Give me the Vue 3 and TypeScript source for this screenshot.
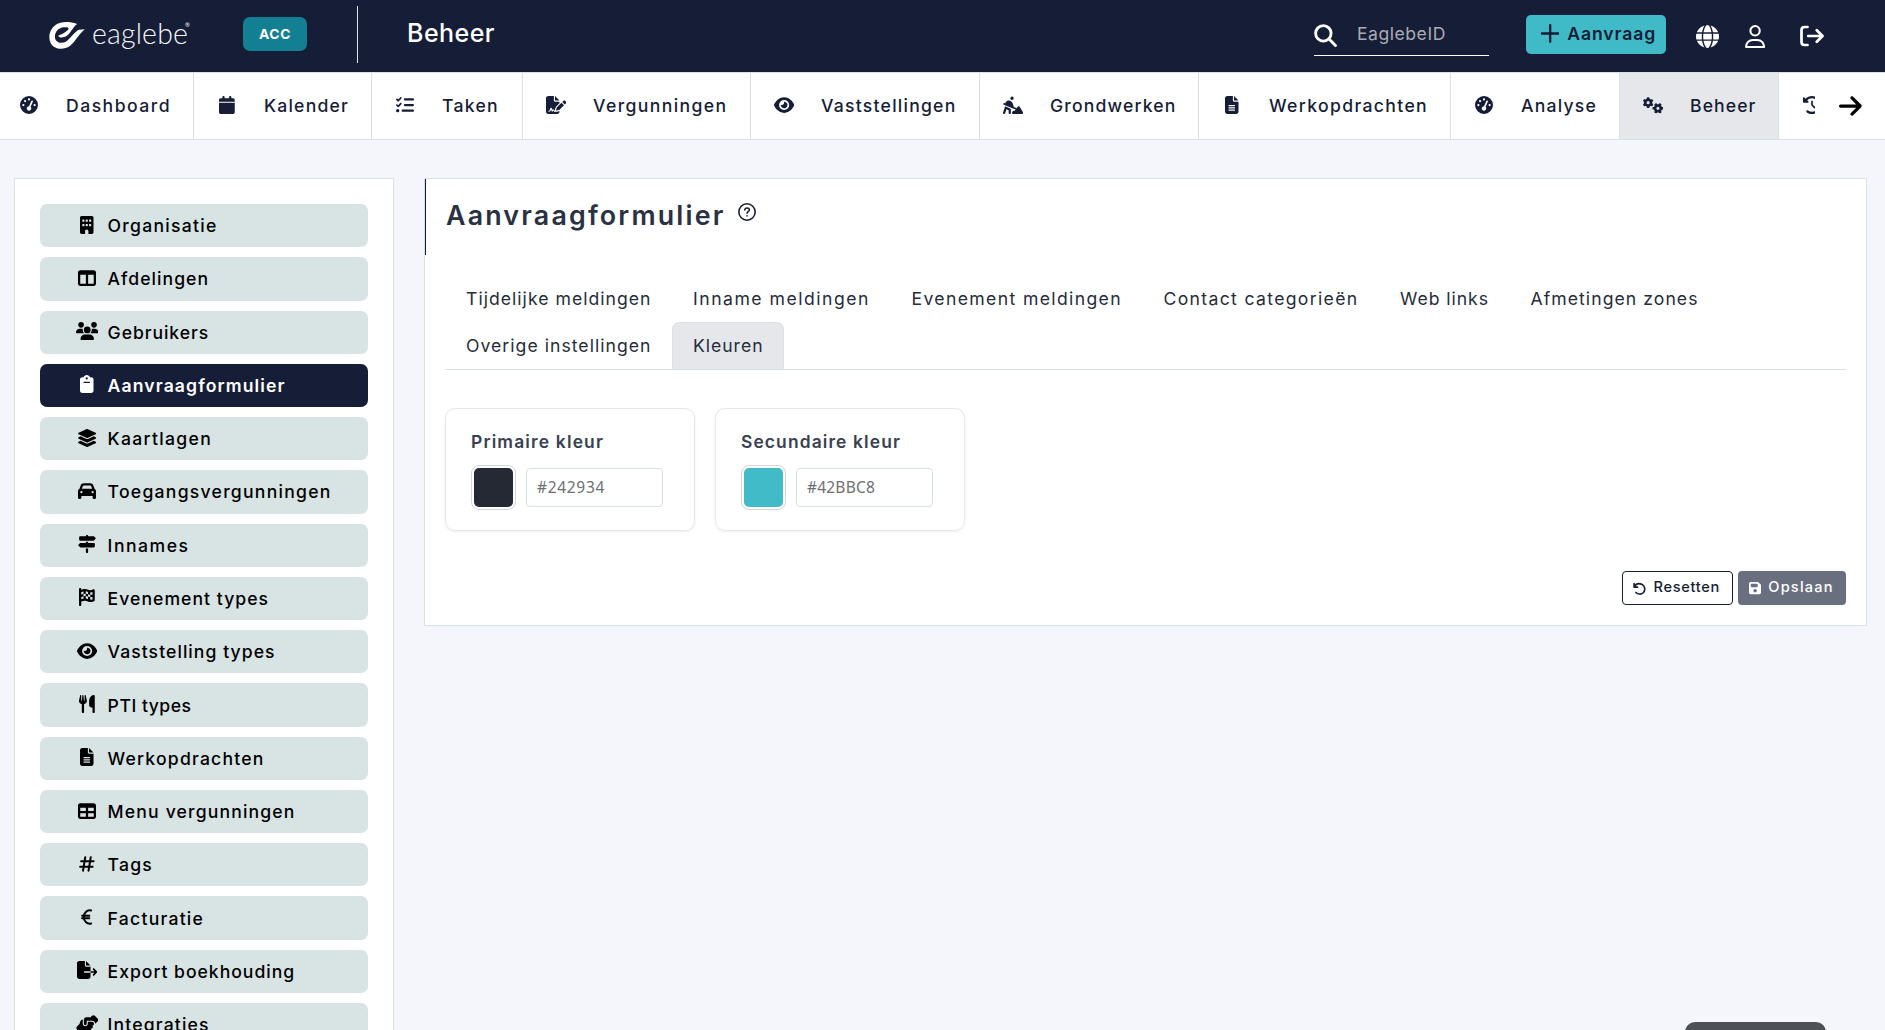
<script setup lang="ts">
import { h } from 'vue'

interface Glyph {
  w: number
  d: string
  stroke?: number
}

const glyphs: Record<string, Glyph> = {
  gauge: { w: 512, d: 'M0 256a256 256 0 1 1 512 0A256 256 0 1 1 0 256zM288 96a32 32 0 1 0 -64 0 32 32 0 1 0 64 0zM256 416c35.3 0 64-28.7 64-64c0-17.4-6.9-33.1-18.1-44.6L366 161.7c5.3-12.1-.2-26.3-12.3-31.6s-26.3 .2-31.6 12.3L257.9 288c-.6 0-1.3 0-1.9 0c-35.3 0-64 28.7-64 64s28.7 64 64 64zM176 144a32 32 0 1 0 -64 0 32 32 0 1 0 64 0zM96 288a32 32 0 1 0 0-64 32 32 0 1 0 0 64zm352-32a32 32 0 1 0 -64 0 32 32 0 1 0 64 0z' },
  calendar: { w: 448, d: 'M96 32V64H48C21.5 64 0 85.5 0 112v48H448V112c0-26.5-21.5-48-48-48H352V32c0-17.7-14.3-32-32-32s-32 14.3-32 32V64H160V32c0-17.7-14.3-32-32-32S96 14.3 96 32zM448 192H0V464c0 26.5 21.5 48 48 48H400c26.5 0 48-21.5 48-48V192z' },
  tasks: { w: 512, d: 'M152.1 38.2c9.9 8.9 10.7 24 1.8 33.9l-72 80c-4.4 4.9-10.6 7.8-17.2 7.9s-12.9-2.4-17.6-7L7 113C-2.3 103.6-2.3 88.4 7 79s24.6-9.4 33.9 0l22.1 22.1 55.1-61.2c8.9-9.9 24-10.7 33.9-1.8zm0 160c9.9 8.9 10.7 24 1.8 33.9l-72 80c-4.4 4.9-10.6 7.8-17.2 7.9s-12.9-2.4-17.6-7L7 273c-9.4-9.4-9.4-24.6 0-33.9s24.6-9.4 33.9 0l22.1 22.1 55.1-61.2c8.9-9.9 24-10.7 33.9-1.8zM224 96c0-17.7 14.3-32 32-32H480c17.7 0 32 14.3 32 32s-14.3 32-32 32H256c-17.7 0-32-14.3-32-32zm0 160c0-17.7 14.3-32 32-32H480c17.7 0 32 14.3 32 32s-14.3 32-32 32H256c-17.7 0-32-14.3-32-32zM160 416c0-17.7 14.3-32 32-32H480c17.7 0 32 14.3 32 32s-14.3 32-32 32H192c-17.7 0-32-14.3-32-32zM48 368a48 48 0 1 1 0 96 48 48 0 1 1 0-96z' },
  signature: { w: 576, d: 'M64 0C28.7 0 0 28.7 0 64V448c0 35.3 28.7 64 64 64H320c35.3 0 64-28.7 64-64V428.7c-2.7 1.1-5.4 2-8.2 2.7l-60.1 15c-3 .7-6 1.2-9 1.4c-.9 .1-1.8 .2-2.7 .2H240c-6.1 0-11.6-3.4-14.3-8.8l-8.8-17.7c-1.7-3.4-5.1-5.5-8.8-5.5s-7.2 2.1-8.8 5.5l-8.8 17.7c-2.9 5.9-9.2 9.4-15.7 8.8s-12.1-5.1-13.9-11.3L144 381l-9.8 32.8c-6.1 20.3-24.8 34.2-46 34.2H80c-8.8 0-16-7.2-16-16s7.2-16 16-16h8.2c7.1 0 13.3-4.6 15.3-11.4l14.9-49.5c3.4-11.3 13.8-19.1 25.6-19.1s22.2 7.7 25.6 19.1l11.6 38.6c7.4-6.2 16.8-9.7 26.8-9.7c15.9 0 30.4 9 37.5 23.2l4.4 8.8h8.9c-3.1-8.8-3.7-18.4-1.4-27.8l15-60.1c2.8-11.3 8.6-21.5 16.8-29.7L384 203.6V160H256c-17.7 0-32-14.3-32-32V0H64zM256 0V128H384L256 0zM549.8 139.7c-15.6-15.6-40.9-15.6-56.6 0l-29.4 29.4 71 71 29.4-29.4c15.6-15.6 15.6-40.9 0-56.6l-14.4-14.4zM311.9 321c-4.1 4.1-7 9.2-8.4 14.9l-15 60.1c-1.4 5.5 .2 11.2 4.2 15.2s9.7 5.6 15.2 4.2l60.1-15c5.6-1.4 10.8-4.3 14.9-8.4L512.1 262.7l-71-71L311.9 321z' },
  eye: { w: 576, d: 'M288 32c-80.8 0-145.5 36.8-192.6 80.6C48.6 156 17.3 208 2.5 243.7c-3.3 7.9-3.3 16.7 0 24.6C17.3 304 48.6 356 95.4 399.4C142.5 443.2 207.2 480 288 480s145.5-36.8 192.6-80.6c46.8-43.5 78.1-95.4 93-131.1c3.3-7.9 3.3-16.7 0-24.6c-14.9-35.7-46.2-87.7-93-131.1C433.5 68.8 368.8 32 288 32zM144 256a144 144 0 1 1 288 0 144 144 0 1 1 -288 0zm144-64c0 35.3-28.7 64-64 64c-7.1 0-13.9-1.2-20.3-3.3c-5.5-1.8-11.9 1.6-11.7 7.4c.3 6.9 1.3 13.8 3.2 20.7c13.7 51.2 66.4 81.6 117.6 67.9s81.6-66.4 67.9-117.6c-11.1-41.5-47.8-69.4-88.6-71.1c-5.8-.2-9.2 6.1-7.4 11.7c2.1 6.4 3.3 13.2 3.3 20.3z' },
  digging: { w: 576, d: 'M208 64a48 48 0 1 1 96 0 48 48 0 1 1 -96 0zM9.8 214.8c5.1-12.2 19.1-18 31.4-12.9L60.7 210l22.9-38.1C99.9 144.6 129.3 128 161 128c51.4 0 97 32.9 113.3 81.7l34.6 103.7 79.3 33.1 34.2-45.6c6.4-8.5 16.6-13.3 27.2-12.8s20.3 6.4 25.8 15.5l96 160c5.9 9.9 6.1 22.2 .4 32.2s-16.3 16.2-27.8 16.2H288c-11.1 0-21.4-5.7-27.2-15.2s-6.4-21.2-1.4-31.1l16-32c5.4-10.8 16.5-17.7 28.6-17.7h32l22.5-30L22.8 246.2c-12.2-5.1-18-19.1-12.9-31.4zm82.8 91.8l112 48c11.8 5 19.4 16.6 19.4 29.4v96c0 17.7-14.3 32-32 32s-32-14.3-32-32V405.1l-60.6-26-37 111c-5.6 16.8-23.7 25.8-40.5 20.2S-3.9 486.6 1.6 469.9l48-144 11-33 32 13.7z' },
  file: { w: 384, d: 'M64 0C28.7 0 0 28.7 0 64V448c0 35.3 28.7 64 64 64H320c35.3 0 64-28.7 64-64V160H256c-17.7 0-32-14.3-32-32V0H64zM256 0V128H384L256 0zM112 256H272c8.8 0 16 7.2 16 16s-7.2 16-16 16H112c-8.8 0-16-7.2-16-16s7.2-16 16-16zm0 64H272c8.8 0 16 7.2 16 16s-7.2 16-16 16H112c-8.8 0-16-7.2-16-16s7.2-16 16-16zm0 64H272c8.8 0 16 7.2 16 16s-7.2 16-16 16H112c-8.8 0-16-7.2-16-16s7.2-16 16-16z' },
  gear: { w: 320, d: 'M308.5 135.3c7.1-6.3 9.9-16.2 6.2-25c-2.3-5.3-4.8-10.5-7.6-15.5L304 89.4c-3-5-6.3-9.9-9.8-14.6c-5.7-7.6-15.7-10.1-24.7-7.1l-28.2 9.3c-10.7-8.8-23-16-36.2-20.9L199 27.1c-1.9-9.3-9.1-16.7-18.5-17.8C173.9 8.4 167.2 8 160.4 8h-.7c-6.8 0-13.5 .4-20.1 1.2c-9.4 1.1-16.6 8.6-18.5 17.8L115 56.1c-13.3 5-25.5 12.1-36.2 20.9L50.5 67.8c-9-3-19-.5-24.7 7.1c-3.5 4.7-6.8 9.6-9.9 14.6l-3 5.3c-2.8 5-5.3 10.2-7.6 15.6c-3.7 8.7-.9 18.6 6.2 25l22.2 19.8C32.6 161.9 32 168.9 32 176s.6 14.1 1.7 20.9L11.5 216.7c-7.1 6.3-9.9 16.2-6.2 25c2.3 5.3 4.8 10.5 7.6 15.6l3 5.2c3 5.1 6.3 9.9 9.9 14.6c5.7 7.6 15.7 10.1 24.7 7.1l28.2-9.3c10.7 8.8 23 16 36.2 20.9l6.1 29.1c1.9 9.3 9.1 16.7 18.5 17.8c6.7 .8 13.5 1.2 20.4 1.2s13.7-.4 20.4-1.2c9.4-1.1 16.6-8.6 18.5-17.8l6.1-29.1c13.3-5 25.5-12.1 36.2-20.9l28.2 9.3c9 3 19 .5 24.7-7.1c3.5-4.7 6.8-9.5 9.8-14.6l3.1-5.4c2.8-5 5.3-10.2 7.6-15.5c3.7-8.7 .9-18.6-6.2-25l-22.2-19.8c1.1-6.8 1.7-13.8 1.7-20.9s-.6-14.1-1.7-20.9l22.2-19.8zM112 176a48 48 0 1 1 96 0 48 48 0 1 1 -96 0z' },
  history: { w: 512, d: 'M75 75L41 41C25.9 25.9 0 36.6 0 57.9V168c0 13.3 10.7 24 24 24H134.1c21.4 0 32.1-25.9 17-41l-30.8-30.8C155 85.5 203 64 256 64c106 0 192 86 192 192s-86 192-192 192c-40.8 0-78.6-12.7-109.7-34.4c-14.5-10.1-34.4-6.6-44.6 7.9s-6.6 34.4 7.9 44.6C151.2 495 201.7 512 256 512c141.4 0 256-114.6 256-256S397.4 0 256 0C185.3 0 121.3 28.7 75 75zm181 53c-13.3 0-24 10.7-24 24V256c0 6.4 2.5 12.5 7 17l72 72c9.4 9.4 24.6 9.4 33.9 0s9.4-24.6 0-33.9l-65-65V152c0-13.3-10.7-24-24-24z' },
  arrow: { w: 448, d: 'M438.6 278.6c12.5-12.5 12.5-32.8 0-45.3l-160-160c-12.5-12.5-32.8-12.5-45.3 0s-12.5 32.8 0 45.3L338.8 224 32 224c-17.7 0-32 14.3-32 32s14.3 32 32 32l306.7 0L233.4 393.4c-12.5 12.5-12.5 32.8 0 45.3s32.8 12.5 45.3 0l160-160z' },
  building: { w: 384, d: 'M48 0C21.5 0 0 21.5 0 48V464c0 26.5 21.5 48 48 48h96V432c0-26.5 21.5-48 48-48s48 21.5 48 48v80h96c26.5 0 48-21.5 48-48V48c0-26.5-21.5-48-48-48H48zM64 240c0-8.8 7.2-16 16-16h32c8.8 0 16 7.2 16 16v32c0 8.8-7.2 16-16 16H80c-8.8 0-16-7.2-16-16V240zm112-16h32c8.8 0 16 7.2 16 16v32c0 8.8-7.2 16-16 16H176c-8.8 0-16-7.2-16-16V240c0-8.8 7.2-16 16-16zm80 16c0-8.8 7.2-16 16-16h32c8.8 0 16 7.2 16 16v32c0 8.8-7.2 16-16 16H272c-8.8 0-16-7.2-16-16V240zM80 96h32c8.8 0 16 7.2 16 16v32c0 8.8-7.2 16-16 16H80c-8.8 0-16-7.2-16-16V112c0-8.8 7.2-16 16-16zm80 16c0-8.8 7.2-16 16-16h32c8.8 0 16 7.2 16 16v32c0 8.8-7.2 16-16 16H176c-8.8 0-16-7.2-16-16V112zM272 96h32c8.8 0 16 7.2 16 16v32c0 8.8-7.2 16-16 16H272c-8.8 0-16-7.2-16-16V112c0-8.8 7.2-16 16-16z' },
  columns: { w: 512, d: 'M0 96C0 60.7 28.7 32 64 32H448c35.3 0 64 28.7 64 64V416c0 35.3-28.7 64-64 64H64c-35.3 0-64-28.7-64-64V96zm64 64V416H224V160H64zm384 0H288V416H448V160z' },
  users: { w: 640, d: 'M144 0a80 80 0 1 1 0 160A80 80 0 1 1 144 0zM512 0a80 80 0 1 1 0 160A80 80 0 1 1 512 0zM0 298.7C0 239.8 47.8 192 106.7 192h42.7c15.9 0 31 3.5 44.6 9.7c-1.3 7.2-1.9 14.7-1.9 22.3c0 38.2 16.8 72.5 43.3 96c-.2 0-.4 0-.7 0H21.3C9.6 320 0 310.4 0 298.7zM405.3 320c-.2 0-.4 0-.7 0c26.6-23.5 43.3-57.8 43.3-96c0-7.6-.7-15-1.9-22.3c13.6-6.3 28.7-9.7 44.6-9.7h42.7C592.2 192 640 239.8 640 298.7c0 11.8-9.6 21.3-21.3 21.3H405.3zM224 224a96 96 0 1 1 192 0 96 96 0 1 1 -192 0zM128 485.3C128 411.7 187.7 352 261.3 352H378.7C452.3 352 512 411.7 512 485.3c0 14.7-11.9 26.7-26.7 26.7H154.7c-14.7 0-26.7-11.9-26.7-26.7z' },
  clipboard: { w: 384, d: 'M192 0c-41.8 0-77.4 26.7-90.5 64H64C28.7 64 0 92.7 0 128V448c0 35.3 28.7 64 64 64H320c35.3 0 64-28.7 64-64V128c0-35.3-28.7-64-64-64H282.5C269.4 26.7 233.8 0 192 0zm0 64a32 32 0 1 1 0 64 32 32 0 1 1 0-64zM112 192H272c8.8 0 16 7.2 16 16s-7.2 16-16 16H112c-8.8 0-16-7.2-16-16s7.2-16 16-16z' },
  layers: { w: 576, d: 'M264.5 5.2c14.9-6.9 32.1-6.9 47 0l218.6 101c8.5 3.9 13.9 12.4 13.9 21.8s-5.4 17.9-13.9 21.8l-218.6 101c-14.9 6.9-32.1 6.9-47 0L45.9 149.8C37.4 145.8 32 137.3 32 128s5.4-17.9 13.9-21.8L264.5 5.2zM476.9 209.6l53.2 24.6c8.5 3.9 13.9 12.4 13.9 21.8s-5.4 17.9-13.9 21.8l-218.6 101c-14.9 6.9-32.1 6.9-47 0L45.9 277.8C37.4 273.8 32 265.3 32 256s5.4-17.9 13.9-21.8l53.2-24.6 152 70.2c23.4 10.8 50.4 10.8 73.8 0l152-70.2zm-152 198.2l152-70.2 53.2 24.6c8.5 3.9 13.9 12.4 13.9 21.8s-5.4 17.9-13.9 21.8l-218.6 101c-14.9 6.9-32.1 6.9-47 0L45.9 405.8C37.4 401.8 32 393.3 32 384s5.4-17.9 13.9-21.8l53.2-24.6 152 70.2c23.4 10.8 50.4 10.8 73.8 0z' },
  car: { w: 512, d: 'M135.2 117.4L109.1 192H402.9l-26.1-74.6C372.3 104.6 360.2 96 346.6 96H165.4c-13.6 0-25.7 8.6-30.2 21.4zM39.6 196.8L74.8 96.3C88.3 57.8 124.6 32 165.4 32H346.6c40.8 0 77.1 25.8 90.6 64.3l35.2 100.5c23.2 9.6 39.6 32.5 39.6 59.2V400v48c0 17.7-14.3 32-32 32H448c-17.7 0-32-14.3-32-32V400H96v48c0 17.7-14.3 32-32 32H32c-17.7 0-32-14.3-32-32V400 256c0-26.7 16.4-49.6 39.6-59.2zM128 288a32 32 0 1 0 -64 0 32 32 0 1 0 64 0zm288 32a32 32 0 1 0 0-64 32 32 0 1 0 0 64z' },
  signs: { w: 512, d: 'M224 32H64C46.3 32 32 46.3 32 64v64c0 17.7 14.3 32 32 32H441.4c4.2 0 8.3-1.7 11.3-4.7l48-48c6.2-6.2 6.2-16.4 0-22.6l-48-48c-3-3-7.1-4.7-11.3-4.7H288c0-17.7-14.3-32-32-32s-32 14.3-32 32zM480 256c0-17.7-14.3-32-32-32H288V192H224v32H70.6c-4.2 0-8.3 1.7-11.3 4.7l-48 48c-6.2 6.2-6.2 16.4 0 22.6l48 48c3 3 7.1 4.7 11.3 4.7H448c17.7 0 32-14.3 32-32V256zM288 480V384H224v96c0 17.7 14.3 32 32 32s32-14.3 32-32z' },
  flag: { w: 448, d: 'M32 0C49.7 0 64 14.3 64 32V48l69-17.2c38.1-9.5 78.3-5.1 113.5 12.5c46.3 23.2 100.8 23.2 147.1 0l9.6-4.8C423.8 28.1 448 43.1 448 66.1V345.8c0 13.3-8.3 25.3-20.8 30l-34.7 13c-46.2 17.3-97.6 14.6-141.7-7.4c-37.9-19-81.4-23.7-122.5-13.4L64 384v96c0 17.7-14.3 32-32 32s-32-14.3-32-32V400 334 64 32C0 14.3 14.3 0 32 0zM64 187.1l64-13.9v65.5L64 252.6V318l48.8-12.2c5.1-1.3 10.1-2.4 15.2-3.3V238.7l38.9-8.4c8.3-1.8 16.7-2.5 25.1-2.1l0-64c13.6 .4 27.2 2.6 40.4 6.4l23.6 6.9v66.7l-41.7-12.3c-7.3-2.1-14.8-3.4-22.3-3.8v71.4c21.8 1.9 43.3 6.7 64 14.4V244.2l22.7 6.7c13.5 4 27.3 6.4 41.3 7.4V194c-7.8-.8-15.6-2.3-23.2-4.5l-40.8-12v-62c-13-3.8-25.8-8.8-38.2-15c-8.2-4.1-16.9-7-25.8-8.8v72.4c-13-.4-26 .8-38.7 3.6L128 173.2V98L64 114v73.1zM320 335.7c16.8 1.5 33.9-.7 50-6.8l14-5.2V251.9l-7.9 1.8c-18.4 4.3-37.3 5.7-56.1 4.5v77.4zm64-149.4V115.4c-20.9 6.1-42.4 9.1-64 9.1V194c13.9 1.4 28 .5 41.7-2.6l22.3-5.2z' },
  utensils: { w: 448, d: 'M416 0C400 0 288 32 288 176V288c0 35.3 28.7 64 64 64h32V480c0 17.7 14.3 32 32 32s32-14.3 32-32V352 240 32c0-17.7-14.3-32-32-32zM64 16C64 7.8 57.9 1 49.7 .1S34.2 4.6 32.4 12.5L2.1 148.8C.7 155.1 0 161.5 0 167.9c0 45.9 35.1 83.6 80 87.7V480c0 17.7 14.3 32 32 32s32-14.3 32-32V255.6c44.9-4.1 80-41.8 80-87.7c0-6.4-.7-12.8-2.1-19.1L191.6 12.5c-1.8-8-9.3-13.3-17.4-12.4S160 7.8 160 16V150.2c0 5.4-4.4 9.8-9.8 9.8c-5.1 0-9.3-3.9-9.8-9L127.9 14.6C127.2 6.3 120.3 0 112 0s-15.2 6.3-15.9 14.6L83.7 151c-.5 5.1-4.7 9-9.8 9c-5.4 0-9.8-4.4-9.8-9.8V16z' },
  table: { w: 512, d: 'M64 256V160H224v96H64zm0 64H224v96H64V320zm224 96V320H448v96H288zM448 256H288V160H448v96zM64 32C28.7 32 0 60.7 0 96V416c0 35.3 28.7 64 64 64H448c35.3 0 64-28.7 64-64V96c0-35.3-28.7-64-64-64H64z' },
  hash: { w: 448, stroke: 56, d: 'M178 64L114 448M334 64L270 448M60 176H416M32 336H388' },
  euro: { w: 320, stroke: 58, d: 'M288 72C176 44 84 130 76 256C84 382 176 468 288 440M32 218H236M32 294H236' },
  export: { w: 576, d: 'M0 64C0 28.7 28.7 0 64 0H224V128c0 17.7 14.3 32 32 32H384V288H216c-13.3 0-24 10.7-24 24s10.7 24 24 24H384V448c0 35.3-28.7 64-64 64H64c-35.3 0-64-28.7-64-64V64zM384 336V288H494.1l-39-39c-9.4-9.4-9.4-24.6 0-33.9s24.6-9.4 33.9 0l80 80c9.4 9.4 9.4 24.6 0 33.9l-80 80c-9.4 9.4-24.6 9.4-33.9 0s-9.4-24.6 0-33.9l39-39H384zm0-208H256V0L384 128z' },
  handshake: { w: 640, d: 'M544 248v3.3l69.7-69.7c21.9-21.9 21.9-57.3 0-79.2L535.6 24.4c-21.9-21.9-57.3-21.9-79.2 0L416.3 64.5c-2.7-.3-5.5-.5-8.3-.5H296c-37.1 0-67.6 28-71.6 64H224V248c0 22.1 17.9 40 40 40s40-17.9 40-40V176c0 0 0-.1 0-.1V160l16 0 136 0c0 0 0 0 .1 0H464c44.2 0 80 35.8 80 80v8zM336 192v56c0 39.8-32.2 72-72 72s-72-32.2-72-72V129.4c-35.9 6.2-65.8 32.3-76 68.2L99.5 255.2 26.3 328.4c-21.9 21.9-21.9 57.3 0 79.2l78.1 78.1c21.9 21.9 57.3 21.9 79.2 0l37.7-37.7c.9 0 1.8 .1 2.7 .1H384c26.5 0 48-21.5 48-48c0-5.6-1-11-2.7-16H432c26.5 0 48-21.5 48-48c0-12.8-5-24.4-13.2-33c25.7-5 45.1-27.6 45.2-54.8v-.4c-.1-30.8-25.1-55.8-56-55.8c0 0 0 0 0 0l-120 0z' },
  globe: { w: 512, d: 'M352 256c0 22.2-1.2 43.6-3.3 64H163.3c-2.2-20.4-3.3-41.8-3.3-64s1.2-43.6 3.3-64H348.7c2.2 20.4 3.3 41.8 3.3 64zm28.8-64H503.9c5.3 20.5 8.1 41.9 8.1 64s-2.8 43.5-8.1 64H380.8c2.1-20.6 3.2-42 3.2-64s-1.1-43.4-3.2-64zm112.6-32H376.7c-10-63.9-29.8-117.4-55.3-151.6c78.3 20.7 142 77.5 171.9 151.6zm-149.1 0H167.7c6.1-36.4 15.5-68.6 27-94.7c10.5-23.6 22.2-40.7 33.5-51.5C239.4 3.2 248.7 0 256 0s16.6 3.2 27.8 13.8c11.3 10.8 23 27.9 33.5 51.5c11.6 26 20.9 58.2 27 94.7zm-209 0H18.6C48.6 85.9 112.2 29.1 190.6 8.4C165.1 42.6 145.3 96.1 135.3 160zM8.1 192H131.2c-2.1 20.6-3.2 42-3.2 64s1.1 43.4 3.2 64H8.1C2.8 299.5 0 278.1 0 256s2.8-43.5 8.1-64zM194.7 446.6c-11.6-26-20.9-58.2-27-94.6H344.3c-6.1 36.4-15.5 68.6-27 94.6c-10.5 23.6-22.2 40.7-33.5 51.5C272.6 508.8 263.3 512 256 512s-16.6-3.2-27.8-13.8c-11.3-10.8-23-27.9-33.5-51.5zM135.3 352c10 63.9 29.8 117.4 55.3 151.6C112.2 482.9 48.6 426.1 18.6 352H135.3zm358.1 0c-30 74.1-93.6 130.9-171.9 151.6c25.5-34.2 45.2-87.7 55.3-151.6H493.4z' },
  person: { w: 448, stroke: 46, d: 'M224 24a104 104 0 1 1 0 208a104 104 0 1 1 0-208zM24 488c0-92 66-156 150-156H274c84 0 150 64 150 156z' },
  logout: { w: 512, stroke: 58, d: 'M160 64H96c-36 0-64 28-64 64V384c0 36 28 64 64 64H160M176 256H478M358 134L480 256L358 378' },
  search: { w: 512, stroke: 64, d: 'M208 36a172 172 0 1 1 0 344a172 172 0 1 1 0-344zM334 334L478 478' },
  plus: { w: 448, stroke: 56, d: 'M224 52V460M20 256H428' },
  help: { w: 512, stroke: 44, d: 'M256 24a232 232 0 1 1 0 464a232 232 0 1 1 0-464zM190 196c6-38 32-52 68-52c40 0 66 22 66 56c0 42-64 48-66 92M256 364v4' },
  undo: { w: 512, stroke: 66, d: 'M44 66V202H180M52 196C92 100 190 52 290 76C400 100 470 200 462 300C450 410 360 480 256 474C200 472 150 450 116 414' },
  save: { w: 448, d: 'M64 32C28.7 32 0 60.7 0 96V416c0 35.3 28.7 64 64 64H384c35.3 0 64-28.7 64-64V173.3c0-17-6.7-33.3-18.7-45.3L352 50.7C340 38.7 323.7 32 306.7 32H64zm0 96c0-17.7 14.3-32 32-32H288c17.7 0 32 14.3 32 32v64c0 17.7-14.3 32-32 32H96c-17.7 0-32-14.3-32-32V128zM224 288a64 64 0 1 1 0 128 64 64 0 1 1 0-128z' },
}

// Icon drawn at the given height; its width follows from the glyph's own box.
const Icon = (props: { name: string; size: number }) => {
  if (props.name === 'gears') {
    const d = glyphs.gear.d
    return h('svg', { viewBox: '0 0 640 528', width: (props.size * 640) / 528, height: props.size, fill: 'currentColor' }, [
      h('path', { d }),
      h('path', { d, transform: 'translate(464 352) rotate(90) translate(-160 -176)' }),
    ])
  }
  const g = glyphs[props.name]
  const paint = g.stroke
    ? { fill: 'none', stroke: 'currentColor', 'stroke-width': g.stroke, 'stroke-linecap': 'round', 'stroke-linejoin': 'round' }
    : { fill: 'currentColor' }
  return h('svg', { viewBox: `0 0 ${g.w} 512`, width: (props.size * g.w) / 512, height: props.size, ...paint }, [h('path', { d: g.d })])
}
Icon.props = ['name', 'size']

// Tracks a label out (or in) so that it takes up exactly the given width.
const vSpan = {
  mounted(el: HTMLElement, binding: { value: number }) {
    const natural = el.getBoundingClientRect().width
    const count = (el.textContent ?? '').length
    el.style.letterSpacing = `${(binding.value - natural) / count}px`
    el.style.width = `${binding.value}px`
  },
}

const nav = [
  { icon: 'gauge', label: 'Dashboard', span: 105, width: 194 },
  { icon: 'calendar', label: 'Kalender', span: 85, width: 178 },
  { icon: 'tasks', label: 'Taken', span: 57, width: 151 },
  { icon: 'signature', label: 'Vergunningen', span: 134.5, width: 228 },
  { icon: 'eye', label: 'Vaststellingen', span: 135.5, width: 229 },
  { icon: 'digging', label: 'Grondwerken', span: 126.5, width: 219 },
  { icon: 'file', label: 'Werkopdrachten', span: 159, width: 252 },
  { icon: 'gauge', label: 'Analyse', span: 76, width: 169 },
  { icon: 'gears', label: 'Beheer', span: 66.5, width: 159, active: true },
  { icon: 'history', label: '', span: 0, width: 180 },
]

const menu = [
  { icon: 'building', label: 'Organisatie', span: 110 },
  { icon: 'columns', label: 'Afdelingen', span: 101.5 },
  { icon: 'users', label: 'Gebruikers', span: 101.5 },
  { icon: 'clipboard', label: 'Aanvraagformulier', span: 178, active: true },
  { icon: 'layers', label: 'Kaartlagen', span: 104.5 },
  { icon: 'car', label: 'Toegangsvergunningen', span: 224 },
  { icon: 'signs', label: 'Innames', span: 82 },
  { icon: 'flag', label: 'Evenement types', span: 161.5 },
  { icon: 'eye', label: 'Vaststelling types', span: 168 },
  { icon: 'utensils', label: 'PTI types', span: 84 },
  { icon: 'file', label: 'Werkopdrachten', span: 157 },
  { icon: 'table', label: 'Menu vergunningen', span: 188 },
  { icon: 'hash', label: 'Tags', span: 45.5 },
  { icon: 'euro', label: 'Facturatie', span: 96.5 },
  { icon: 'export', label: 'Export boekhouding', span: 187.5 },
  { icon: 'handshake', label: 'Integraties', span: 102 },
]

const tabs = [
  { label: 'Tijdelijke meldingen', span: 185.5 },
  { label: 'Inname meldingen', span: 177 },
  { label: 'Evenement meldingen', span: 210.5 },
  { label: 'Contact categorieën', span: 195 },
  { label: 'Web links', span: 89 },
  { label: 'Afmetingen zones', span: 168 },
  { label: 'Overige instellingen', span: 185.5 },
  { label: 'Kleuren', span: 70.5, active: true },
]

const colors = [
  { label: 'Primaire kleur', span: 133, value: '#242934' },
  { label: 'Secundaire kleur', span: 160, value: '#42BBC8' },
]
</script>

<template>
  <div class="page">
    <header class="top">
      <div class="logo">
        <svg class="mark" viewBox="0 0 107 81" width="36" height="27" fill="#fff">
          <path d="M84 6C60 -2 36 -2 20 8C2 20 -4 44 4 62C14 82 42 86 62 72C78 60 88 38 107 22L90 23C76 28 64 50 50 59C38 66 21 62 18 50C14 34 26 17 44 16C52 15 59 17 58 20C56 27 40 36 27 41C30 48 42 48 52 42C66 32 70 16 84 6Z" />
        </svg>
        <span v-span="96" class="wordmark">eaglebe</span>
        <sup class="reg">®</sup>
      </div>
      <span class="badge"><span v-span="32">ACC</span></span>
      <i class="divider"></i>
      <h1 class="heading"><span v-span="88">Beheer</span></h1>
      <div class="search">
        <Icon name="search" :size="23" />
        <span v-span="89" class="hint">EaglebeID</span>
      </div>
      <button class="request">
        <Icon name="plus" :size="21" />
        <span v-span="89">Aanvraag</span>
      </button>
      <Icon class="globe" name="globe" :size="23" />
      <Icon class="person" name="person" :size="23" />
      <Icon class="logout" name="logout" :size="24" />
    </header>

    <nav class="nav">
      <div class="nav-items">
        <a v-for="n in nav" :key="n.label" class="nav-item" :class="{ active: n.active }" :style="{ width: n.width + 'px' }">
          <span class="nav-icon"><Icon :name="n.icon" :size="n.icon === 'gears' ? 17 : 18" /></span>
          <span v-if="n.label" v-span="n.span" class="nav-label">{{ n.label }}</span>
        </a>
      </div>
      <Icon class="next" name="arrow" :size="26" />
    </nav>

    <div class="body">
      <aside class="side">
        <a v-for="m in menu" :key="m.label" class="side-item" :class="{ active: m.active }">
          <span class="side-icon"><Icon :name="m.icon" :size="18" /></span>
          <span v-span="m.span">{{ m.label }}</span>
        </a>
      </aside>

      <main class="panel">
        <div class="title">
          <h2><span v-span="279.5">Aanvraagformulier</span></h2>
          <Icon class="help" name="help" :size="18" />
        </div>
        <div class="tabs">
          <a v-for="t in tabs" :key="t.label" class="tab" :class="{ active: t.active }"><span v-span="t.span">{{ t.label }}</span></a>
        </div>
        <div class="cards">
          <section v-for="c in colors" :key="c.label" class="card">
            <h3><span v-span="c.span">{{ c.label }}</span></h3>
            <div class="row">
              <span class="swatch"><i :style="{ background: c.value }"></i></span>
              <span class="field"><span v-span="68">{{ c.value }}</span></span>
            </div>
          </section>
        </div>
        <div class="actions">
          <button class="btn reset"><Icon name="undo" :size="13" /><span v-span="66.5">Resetten</span></button>
          <button class="btn save"><Icon name="save" :size="14" /><span v-span="65.5">Opslaan</span></button>
        </div>
      </main>
    </div>
    <div class="toast"></div>
  </div>
</template>

<style>
body {
  background: #f4f6fb;
  overflow: hidden;
}
</style>

<style scoped>
.page {
  position: relative;
  height: 1030px;
  overflow: hidden;
  background: #f4f6fb;
  font-family: Inter, Roboto, sans-serif;
  font-size: 17.6px;
  color: #161d36;
}
.page * {
  box-sizing: border-box;
}
.page span {
  display: inline-block;
  white-space: nowrap;
}
svg {
  display: block;
  flex: none;
}
h1,
h2,
h3 {
  margin: 0;
}
button {
  font: inherit;
  color: inherit;
  border: 0;
  padding: 0;
}

.top {
  display: flex;
  align-items: flex-start;
  height: 72px;
  background: #161d36;
  color: #fff;
}
.logo {
  display: flex;
  width: 194px;
  padding-left: 49px;
  flex: none;
  margin-right: 49px;
}
.mark {
  margin-top: 22px;
}
.page .wordmark {
  margin: 16px 0 0 7px;
  font: 300 28.5px/34px Lato, sans-serif;
  color: #f4f5f8;
}
.reg {
  margin: 20px 0 0 -3px;
  font: 6px/10px Lato, sans-serif;
}
.page .badge {
  display: flex;
  align-items: center;
  justify-content: center;
  flex: none;
  width: 64px;
  height: 34px;
  margin-top: 17px;
  border-radius: 7px;
  background: #128092;
  font-size: 13.8px;
  font-weight: 700;
}
.divider {
  flex: none;
  width: 1px;
  height: 57px;
  margin: 6px 0 0 50px;
  background: #dfe5ea;
}
.heading {
  flex: 1;
  margin: 16px 0 0 49px;
  font-size: 25px;
  line-height: 34px;
  font-weight: 500;
}
.search {
  display: flex;
  flex: none;
  width: 175px;
  height: 56px;
  padding-top: 24px;
  border-bottom: 1px solid #fff;
}
.hint {
  margin-left: 20px;
  line-height: 20px;
  color: #a9abb4;
}
.request {
  display: flex;
  flex: none;
  align-items: center;
  width: 140px;
  height: 39px;
  margin: 15px 30px 0 37px;
  padding: 0 0 2px 15px;
  border-radius: 5px;
  background: #41bac8;
  color: #161d36;
  font-weight: 600;
}
.request span {
  margin-left: 8px;
}
.globe {
  margin-top: 25px;
}
.person {
  margin: 25px 0 0 26px;
}
.logout {
  margin: 24px 61px 0 35px;
}

.nav {
  display: flex;
  align-items: center;
  height: 68px;
  border-top: 1px solid #d7e3e3;
  border-bottom: 1px solid #d7e3e3;
  background: #fff;
}
.nav-items {
  display: flex;
  width: 1815px;
  height: 66px;
  overflow: hidden;
}
.nav-item {
  display: flex;
  flex: none;
  align-items: center;
  padding-left: 22px;
  border-right: 1px solid #d7e3e3;
  font-weight: 450;
}
.nav-item:first-child {
  padding-left: 18px;
}
.nav-item.active {
  background: #e5e7eb;
}
.page .nav-icon {
  display: flex;
  justify-content: center;
  flex: none;
  width: 22px;
  margin: 0 26px 2px 0;
}
.nav-label {
  margin-bottom: 2px;
}
.next {
  margin: 0 0 1px 24px;
  color: #000;
}

.body {
  display: flex;
  align-items: flex-start;
  gap: 30px;
  padding: 38px 0 0 14px;
}
.side {
  display: flex;
  flex-direction: column;
  gap: 10px;
  width: 380px;
  height: 900px;
  padding: 25px 25px 0;
  border: 1px solid #d7e3e3;
  background: #fff;
}
.side-item {
  display: flex;
  align-items: center;
  flex: none;
  height: 43.27px;
  border-radius: 7px;
  background: #d8e3e4;
  color: #000;
  font-weight: 500;
}
.side-item.active {
  background: #161d36;
  color: #fff;
  font-weight: 600;
}
.page .side-icon {
  display: flex;
  justify-content: center;
  width: 24px;
  margin: 0 8.6px 2px 35px;
}

.panel {
  width: 1443px;
  height: 448px;
  border: 1px solid #d7e3e3;
  background: #fff;
}
.title {
  display: flex;
  height: 76px;
  padding-left: 20px;
  border-left: 1px solid #161d36;
  color: #2a3142;
}
.title h2 {
  padding-top: 19px;
  font-size: 26.8px;
  line-height: 35px;
  font-weight: 600;
}
.help {
  margin: 24px 0 0 12.5px;
  color: #161d36;
}
.tabs {
  display: flex;
  flex-wrap: wrap;
  margin: 20px 20px 0;
  border-bottom: 1px solid #d7e3e3;
}
.tab {
  height: 47px;
  padding: 0 19.5px 0 20px;
  border: 1px solid transparent;
  border-bottom: 0;
  border-radius: 7px 7px 0 0;
  line-height: 45px;
  color: #262c3a;
}
.tab.active {
  border-color: #d7e3e3;
  background: #e5e7eb;
}
.cards {
  display: flex;
  gap: 20px;
  padding: 38px 20px 0;
}
.card {
  width: 250px;
  height: 123px;
  padding: 22px 25px 0;
  border: 1px solid #e5e7eb;
  border-radius: 10px;
  box-shadow: 0 1px 3px rgba(0, 0, 0, 0.07);
}
.card h3 {
  font-size: 17.4px;
  line-height: 22px;
  font-weight: 600;
  color: #374151;
}
.row {
  display: flex;
  align-items: center;
  gap: 10px;
  margin-top: 12px;
}
.page .swatch {
  width: 45px;
  height: 45px;
  padding: 2px;
  border: 1px solid #d1d5db;
  border-radius: 8px;
}
.swatch i {
  display: block;
  height: 39px;
  border-radius: 5px;
}
.field {
  width: 137px;
  height: 39px;
  padding-left: 10px;
  border: 1px solid #d5e3e3;
  border-radius: 4px;
  font-family: 'Noto Sans', sans-serif;
  font-size: 15.5px;
  line-height: 37px;
  color: #6d6f73;
}
.actions {
  display: flex;
  justify-content: flex-end;
  gap: 5px;
  padding: 40px 20px 0 0;
}
.btn {
  display: flex;
  align-items: center;
  height: 34px;
  border-radius: 4px;
  font-size: 14.6px;
  font-weight: 500;
}
.btn span {
  margin-bottom: 2px;
}
.reset {
  width: 111px;
  padding-left: 10px;
  border: 1px solid #161d36;
  background: #fff;
}
.reset span {
  margin-left: 7.5px;
}
.save {
  width: 108px;
  padding-left: 11px;
  background: #6a6f80;
  color: #fff;
}
.save span {
  margin-left: 7px;
}

.toast {
  position: absolute;
  left: 1685px;
  top: 1022px;
  width: 141px;
  height: 40px;
  border-radius: 10px;
  background: #4e5155;
}
</style>
